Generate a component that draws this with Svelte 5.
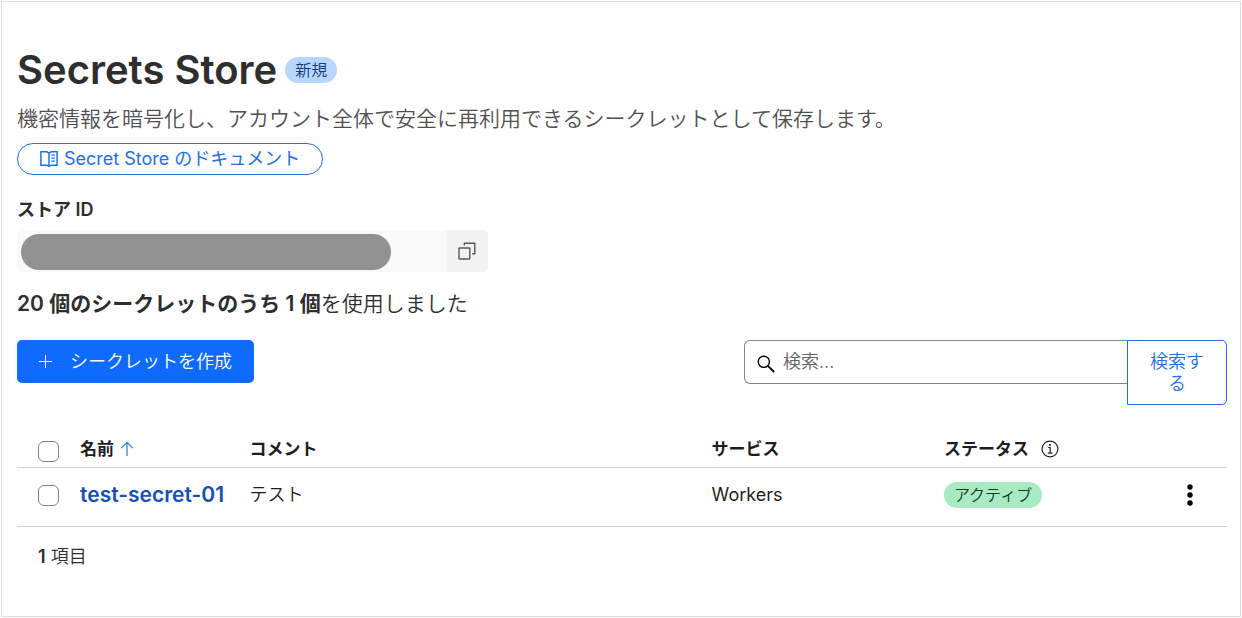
<script>
  let query = $state('');
  let selected = $state([]);

  const secrets = [
    { name: 'test-secret-01', comment: 'テスト', service: 'Workers', status: 'アクティブ' }
  ];

  let allSelected = $derived(selected.length === secrets.length);

  function toggleAll(event) {
    selected = event.currentTarget.checked ? secrets.map((s) => s.name) : [];
  }
</script>

<main class="page">
  <header class="intro">
    <div class="title-row">
      <h1>Secrets Store</h1>
      <span class="badge badge-new">新規</span>
    </div>
    <p class="description">機密情報を暗号化し、アカウント全体で安全に再利用できるシークレットとして保存します。</p>
    <a class="docs" href="#docs">
      <svg width="18" height="18" viewBox="0 0 18 18" fill="none" stroke="currentColor" stroke-width="1.5" aria-hidden="true">
        <path d="M9 3.2 6.8 1.8H.9v13.4h5.9L9 16.4l2.2-1.2h5.9V1.8h-5.9L9 3.2v13.6" />
        <path d="M11.3 5.2h3.6M11.3 8.2h3.6M11.3 11.2h3.6" stroke-width="1.3" />
      </svg>
      <span>Secret Store のドキュメント</span>
    </a>
  </header>

  <section class="store">
    <h2>ストア ID</h2>
    <div class="store-id">
      <div class="value"><span class="mask"></span></div>
      <button type="button" class="copy" aria-label="コピー">
        <svg width="18" height="18" viewBox="0 0 18 18" fill="none" stroke="currentColor" stroke-width="1.4" stroke-linejoin="round" aria-hidden="true">
          <rect x="1" y="6" width="10.8" height="11" rx=".6" />
          <path d="M6.3 3.6V1.2h10.5v10.6h-2.6" />
        </svg>
      </button>
    </div>
  </section>

  <p class="usage"><strong>20 個のシークレットのうち 1 個</strong>を使用しました</p>

  <div class="toolbar">
    <button type="button" class="create">
      <svg width="13" height="13" viewBox="0 0 13 13" stroke="currentColor" stroke-width="1" aria-hidden="true">
        <path d="M6.5 0v13M0 6.5h13" />
      </svg>
      <span>シークレットを作成</span>
    </button>

    <form class="search" onsubmit={(e) => e.preventDefault()}>
      <label class="field">
        <svg width="18" height="18" viewBox="0 0 18 18" fill="none" stroke="currentColor" stroke-width="1.4" aria-hidden="true">
          <circle cx="6.8" cy="6.8" r="5.6" />
          <path d="m10.8 10.8 6.4 6.2" stroke-width="1.8" />
        </svg>
        <input type="text" placeholder="検索..." aria-label="検索" bind:value={query} />
      </label>
      <button type="submit">検索する</button>
    </form>
  </div>

  <table>
    <colgroup>
      <col class="c-check" />
      <col class="c-name" />
      <col class="c-comment" />
      <col class="c-service" />
      <col class="c-status" />
      <col class="c-menu" />
    </colgroup>
    <thead>
      <tr>
        <th class="check"><input type="checkbox" aria-label="すべて選択" checked={allSelected} onchange={toggleAll} /></th>
        <th>
          <span class="heading name-heading">
            名前
            <svg width="14" height="16" viewBox="0 0 14 16" fill="none" stroke="#2f7bf0" stroke-width="1.2" aria-hidden="true">
              <path d="M7 15V1.5M1.2 7.2 7 1.4l5.8 5.8" />
            </svg>
          </span>
        </th>
        <th>コメント</th>
        <th>サービス</th>
        <th>
          <span class="heading status-heading">
            ステータス
            <svg width="18" height="18" viewBox="0 0 18 18" fill="none" stroke="#222" stroke-width="1.2" aria-hidden="true">
              <circle cx="9" cy="9" r="7.9" />
              <path d="M7.2 7.5h2v5.4M6.8 13.1h4.6" />
              <circle cx="9" cy="4.9" r="1" fill="#222" stroke="none" />
            </svg>
          </span>
        </th>
        <th></th>
      </tr>
    </thead>
    <tbody>
      {#each secrets as secret}
        <tr>
          <td class="check"><input type="checkbox" aria-label={secret.name} value={secret.name} bind:group={selected} /></td>
          <td><a class="name" href="#{secret.name}">{secret.name}</a></td>
          <td class="light">{secret.comment}</td>
          <td>{secret.service}</td>
          <td><span class="badge badge-active">{secret.status}</span></td>
          <td class="menu">
            <button type="button" aria-label="操作">
              <svg width="6" height="22" viewBox="0 0 6 22" fill="#000" aria-hidden="true">
                <circle cx="3" cy="3" r="2.7" />
                <circle cx="3" cy="11" r="2.7" />
                <circle cx="3" cy="19" r="2.7" />
              </svg>
            </button>
          </td>
        </tr>
      {/each}
    </tbody>
  </table>

  <p class="count"><strong>{secrets.length}</strong> 項目</p>
</main>

<style>
  :global(body) {
    background: #fff;
  }

  .page {
    box-sizing: border-box;
    margin: 1px;
    padding: 44px 13px 47px 15px;
    border: 1px solid #dcdcdc;
    color: #2e2e2e;
    font-family: Inter, "Noto Sans CJK JP", sans-serif;
    font-size: 18px;
    line-height: 24px;
  }

  button,
  input {
    font: inherit;
  }

  h1,
  h2,
  p {
    margin: 0;
  }

  .title-row {
    display: flex;
    align-items: center;
    gap: 8px;
  }

  h1 {
    font-size: 40px;
    font-weight: 600;
    line-height: 48px;
  }

  .badge {
    display: inline-block;
    padding: 0 10px;
    border-radius: 13px;
    font-size: 16px;
    font-weight: 350;
    line-height: 26px;
    white-space: nowrap;
  }

  .badge-new {
    background: #b9d6ff;
    color: #123a7c;
  }

  .badge-active {
    background: #a8ebc3;
    color: #14391f;
  }

  .description {
    padding: 9px 0 8px;
    color: #505050;
    font-size: 21px;
    font-weight: 350;
    line-height: 32px;
  }

  .docs {
    display: inline-flex;
    align-items: center;
    gap: 6px;
    padding: 3px 22px;
    border: 1px solid #2170e8;
    border-radius: 16px;
    color: #2170e8;
    text-decoration: none;
  }

  .store {
    margin-top: 23px;
  }

  h2 {
    font-size: 18px;
    font-weight: 600;
    line-height: 24px;
  }

  .store-id {
    display: flex;
    width: 471px;
    max-width: 100%;
    margin-top: 8px;
    border-radius: 5px;
    overflow: hidden;
    background: #f9f9f9;
  }

  .value {
    flex: 1;
    padding: 4px 4px 2px;
  }

  .mask {
    display: block;
    width: 370px;
    max-width: 100%;
    height: 36px;
    border-radius: 18px;
    background: #929292;
  }

  .copy {
    display: grid;
    place-items: center;
    width: 42px;
    padding: 0;
    border: 0;
    background: #f2f2f2;
    color: #595959;
  }

  .usage {
    margin-top: 16px;
    font-size: 21px;
    font-weight: 350;
    line-height: 32px;
  }

  .usage strong {
    font-weight: 600;
  }

  .toolbar {
    display: flex;
    align-items: flex-start;
    justify-content: space-between;
    gap: 24px;
    margin-top: 20px;
  }

  .create {
    display: flex;
    align-items: center;
    gap: 18px;
    height: 43px;
    padding: 0 22px;
    border: 0;
    border-radius: 5px;
    background: #0f6bff;
    color: #fff;
    font-weight: 350;
    white-space: nowrap;
  }

  .search {
    display: flex;
    align-items: flex-start;
    flex: 0 1 483px;
    font-weight: 350;
  }

  .field {
    display: flex;
    flex: 1;
    align-items: center;
    gap: 8px;
    height: 42px;
    padding-left: 12px;
    border: 1px solid #858585;
    border-right: 0;
    border-radius: 6px 0 0 6px;
    color: #000;
  }

  .field svg {
    margin-top: 4px;
  }

  .field input {
    flex: 1;
    min-width: 0;
    padding: 0;
    border: 0;
    outline: 0;
    background: none;
  }

  .field input::placeholder {
    color: #606060;
    opacity: 1;
  }

  .search button {
    width: 100px;
    padding: 10px 20px 9px;
    border: 1px solid #2170e8;
    border-radius: 0 5px 5px 0;
    background: #fff;
    color: #2170e8;
    line-height: 22px;
  }

  table {
    width: 100%;
    margin-top: 25px;
    border-collapse: collapse;
    table-layout: fixed;
    color: #1d1d1d;
    font-size: 18px;
  }

  .c-check { width: 63px; }
  .c-name { width: 14%; }
  .c-comment { width: 38.2%; }
  .c-service { width: 19.2%; }
  .c-menu { width: 74px; }

  th,
  td {
    padding: 0;
    border-bottom: 1px solid #d0d0d0;
    text-align: left;
  }

  th {
    height: 31px;
    font-size: 17px;
    font-weight: 600;
  }

  td {
    height: 54px;
    padding-bottom: 4px;
  }

  .heading {
    display: flex;
    align-items: center;
  }

  .name-heading {
    gap: 6px;
  }

  .status-heading {
    gap: 12px;
  }

  .check {
    padding-left: 21px;
  }

  .check input {
    display: block;
    appearance: none;
    width: 21px;
    height: 21px;
    margin: 0;
    border: 1px solid #808080;
    border-radius: 6px;
    background: #fff;
  }

  .check input:checked {
    background: #2170e8;
  }

  th.check {
    padding-top: 6px;
  }

  .light {
    font-weight: 350;
  }

  .name {
    color: #1550b8;
    font-size: 21px;
    font-weight: 600;
    text-decoration: none;
  }

  .menu button {
    display: block;
    margin-left: auto;
    padding: 0 34px;
    border: 0;
    background: none;
  }

  .menu svg {
    display: block;
  }

  .count {
    margin-top: 18px;
    padding-left: 21px;
    font-weight: 350;
  }

  .count strong {
    font-weight: 600;
  }
</style>
